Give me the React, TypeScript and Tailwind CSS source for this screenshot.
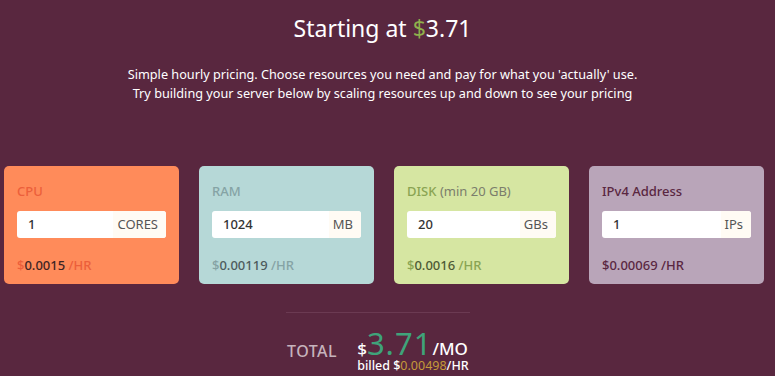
const font = { fontFamily: '"Noto Sans", "Open Sans", sans-serif' };

interface Resource {
  label: string;
  extra?: string;
  value: string;
  unit: string;
  price: string;
  bg: string;
  accent: string;
  num: string;
}

const resources: Resource[] = [
  { label: "CPU", value: "1", unit: "CORES", price: "0.0015", bg: "bg-[#ff8b5a]", accent: "text-[#ec5f3b]", num: "text-[#3d2424]" },
  { label: "RAM", value: "1024", unit: "MB", price: "0.00119", bg: "bg-[#b6d8d7]", accent: "text-[#85a3a5]", num: "text-[#4d5b5c]" },
  { label: "DISK", extra: "(min 20 GB)", value: "20", unit: "GBs", price: "0.0016", bg: "bg-[#d6e6a2]", accent: "text-[#8aa453]", num: "text-[#4d5a35]" },
  { label: "IPv4 Address", value: "1", unit: "IPs", price: "0.00069", bg: "bg-[#b9a5b9]", accent: "text-[#5a2741]", num: "text-[#5a2741]" },
];

export default function App() {
  return (
    <div className="h-[376px] w-[775px] overflow-hidden bg-[#59273f] text-white" style={font}>
      <div className="w-[765px]">
        <h1 className="pt-[14px] text-center text-[23px] leading-[28px]">
          Starting at <span className="text-[#8fb04c]">$</span>3.71
        </h1>
        <div className="mt-[23px] text-center text-[12.7px] leading-[19px]">
          <p>Simple hourly pricing. Choose resources you need and pay for what you 'actually' use.</p>
          <p>Try building your server below by scaling resources up and down to see your pricing</p>
        </div>
      </div>

      <div className="mt-[63px] flex gap-[20px] pl-[4px]">
        {resources.map((r) => (
          <div key={r.label} className={`h-[118px] w-[175px] rounded-[5px] px-[13px] pt-[16px] font-medium ${r.bg}`}>
            <div className={`text-[13px] leading-[18px] ${r.accent}`}>
              {r.label}
              {r.extra && <span className="font-normal text-[#7b7d6c]"> {r.extra}</span>}
            </div>
            <div className="mt-[11px] flex h-[27px] overflow-hidden rounded-[3px] bg-white text-[13px] leading-[27px]">
              <div className="flex-1 pl-[11px] text-[#333]">{r.value}</div>
              <div className="bg-[#fffbf4] pl-[4px] pr-[8px] font-normal text-[#555]">{r.unit}</div>
            </div>
            <div className="mt-[18px] text-[13px] leading-[18px]">
              <span className={r.accent}>$</span>
              <span className={r.num}>{r.price}</span>
              <span className={r.accent}> /HR</span>
            </div>
          </div>
        ))}
      </div>

      <div className="ml-[286px] mt-[28px] h-px w-[184px] bg-[#6b3a52]" />

      <div className="mt-[17px] flex items-start pl-[287px]">
        <div className="mt-[11px] text-[16px] font-medium leading-[20px] tracking-[0.5px] text-[#c6b3bc]">TOTAL</div>
        <div className="ml-[20px]">
          <div className="flex items-baseline leading-[26px]">
            <span className="text-[17px] font-medium">$</span>
            <span className="text-[31px] tracking-[1px] text-[#3fa37a]">3.71</span>
            <span className="text-[17px] font-medium">/MO</span>
          </div>
          <div className="-mt-[3px] text-[12.5px] font-medium leading-[14px]">
            billed $<span className="font-normal text-[#c49a3a]">0.00498</span>/HR
          </div>
        </div>
      </div>
    </div>
  );
}
